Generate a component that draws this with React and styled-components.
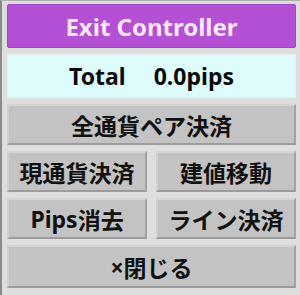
import React from 'react';
import styled, { createGlobalStyle } from 'styled-components';

const GlobalStyle = createGlobalStyle`
  html, body {
    margin: 0;
    padding: 0;
    background: #dedede;
  }
`;

const Panel = styled.div`
  box-sizing: border-box;
  width: 300px;
  height: 295px;
  background: #dedede;
  border-left: 2px solid #8a8a8a;
  border-top: 1px solid #b0b0b0;
  padding: 3px 4px 4px 5px;
  display: flex;
  flex-direction: column;
  gap: 6px;
  font-family: "Noto Sans", "Noto Sans CJK JP", sans-serif;
  font-weight: 700;
`;

const Header = styled.div`
  height: 44px;
  display: flex;
  align-items: center;
  justify-content: center;
  background: #b350d3;
  color: #fbe6fb;
  font-size: 24px;
  border-radius: 2px;
  border: 1px solid #a048c0;
  box-sizing: border-box;
`;

const Total = styled.div`
  height: 44px;
  display: flex;
  align-items: center;
  justify-content: center;
  gap: 28px;
  background: #defcfc;
  color: #0a0a0a;
  font-size: 23px;
  border: 1px solid #ececec;
  box-sizing: border-box;
`;

const Row = styled.div`
  display: grid;
  grid-template-columns: 1fr 1fr;
  gap: 9px;
`;

const Button = styled.button`
  box-sizing: border-box;
  height: ${({ tall }) => (tall ? '43px' : '41px')};
  margin: 0;
  padding: 0;
  display: flex;
  align-items: center;
  justify-content: center;
  background: #c3c3c3;
  color: #111;
  font-family: "Noto Sans CJK JP", "Noto Sans", sans-serif;
  font-weight: 700;
  font-size: 23px;
  border: 2px solid;
  border-color: #d4d4d4 #a2a2a2 #9c9c9c #d0d0d0;
  cursor: pointer;
`;

const Latin = styled.span`
  font-family: "Noto Sans", sans-serif;
`;

export default function App() {
  return (
    <>
      <GlobalStyle />
      <Panel>
        <Header>Exit Controller</Header>
        <Total>
          <span>Total</span>
          <span>0.0pips</span>
        </Total>
        <Button>全通貨ペア決済</Button>
        <Row>
          <Button>現通貨決済</Button>
          <Button>建値移動</Button>
        </Row>
        <Row>
          <Button><Latin>Pips</Latin>消去</Button>
          <Button>ライン決済</Button>
        </Row>
        <Button tall><Latin>×</Latin>閉じる</Button>
      </Panel>
    </>
  );
}
